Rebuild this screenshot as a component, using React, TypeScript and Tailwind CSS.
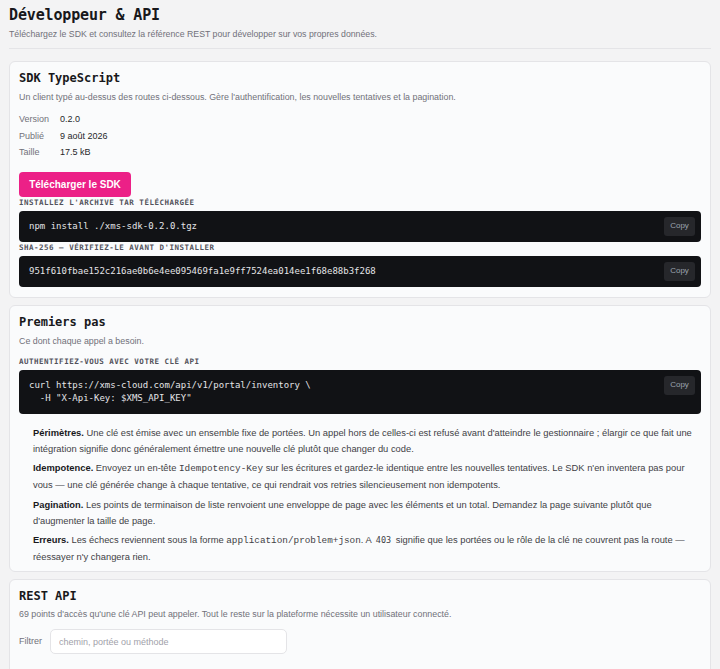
const sans = { fontFamily: '"Liberation Sans", Arial, sans-serif' };
const mono = { fontFamily: '"DejaVu Sans Mono", monospace' };
const ic = { fontFamily: '"Liberation Mono", monospace' };

function Label({ children }: { children: React.ReactNode }) {
  return (
    <div
      className="text-[7.5px] leading-[10px] font-bold uppercase tracking-[0.5px] text-[#52525b]"
      style={mono}
    >
      {children}
    </div>
  );
}

function Code({ lines }: { lines: string[] }) {
  return (
    <div className="relative mt-[3px] rounded-[4px] bg-[#111215] pl-[10px] pr-[44px] py-[9px]">
      <pre className="text-[9px] leading-[13px] text-[#e4e4e7] whitespace-pre" style={mono}>
        {lines.join('\n')}
      </pre>
      <button
        className="absolute top-[6px] right-[6px] h-[19px] w-[31px] rounded-[3px] bg-[#26272b] text-[8px] text-[#9ca3af]"
        style={sans}
      >
        Copy
      </button>
    </div>
  );
}

function Card({ children, className = '' }: { children: React.ReactNode; className?: string }) {
  return (
    <section className={`rounded-md border border-[#e4e4e7] bg-[#fafbfc] px-[9px] ${className}`}>
      {children}
    </section>
  );
}

function CardTitle({ children }: { children: React.ReactNode }) {
  return (
    <h2 className="text-[12px] leading-[16px] font-bold text-[#18181b]" style={mono}>
      {children}
    </h2>
  );
}

export default function App() {
  return (
    <div className="min-h-screen bg-[#f3f3f4] px-[9px] pt-[5px] pb-6 text-[#27272a]" style={sans}>
      <header className="border-b border-[#e4e4e7] pb-[7px]">
        <h1 className="text-[15px] leading-[20px] font-bold text-[#18181b] tracking-[-0.15px]" style={mono}>
          Développeur &amp; API
        </h1>
        <p className="mt-[3px] text-[8.75px] leading-[13px] text-[#71717a]">
          Téléchargez le SDK et consultez la référence REST pour développer sur vos propres données.
        </p>
      </header>

      <div className="mt-[12px] flex flex-col gap-[7px]">
        <Card className="pt-[8px] pb-[10px]">
          <CardTitle>SDK TypeScript</CardTitle>
          <p className="mt-[5px] text-[8.85px] leading-[12px] text-[#71717a]">
            Un client typé au-dessus des routes ci-dessous. Gère l'authentification, les nouvelles tentatives et la pagination.
          </p>
          <dl className="mt-[8px] grid grid-cols-[41px_1fr] text-[9px] leading-[16.5px]">
            <dt className="text-[#71717a]">Version</dt>
            <dd className="text-[#27272a]">0.2.0</dd>
            <dt className="text-[#71717a]">Publié</dt>
            <dd className="text-[#27272a]">9 août 2026</dd>
            <dt className="text-[#71717a]">Taille</dt>
            <dd className="text-[#27272a]">17.5 kB</dd>
          </dl>
          <button className="mt-[11px] h-[25px] w-[112px] rounded-[4px] bg-[#ec2087] text-[10px] font-bold text-white">
            Télécharger le SDK
          </button>
          <div className="mt-[1px]">
            <Label>Installez l'archive tar téléchargée</Label>
          </div>
          <Code lines={['npm install ./xms-sdk-0.2.0.tgz']} />
          <div className="mt-[1px]">
            <Label>SHA-256 — vérifiez-le avant d'installer</Label>
          </div>
          <Code lines={['951f610fbae152c216ae0b6e4ee095469fa1e9ff7524ea014ee1f68e88b3f268']} />
        </Card>

        <Card className="pt-[8px] pb-[6px]">
          <CardTitle>Premiers pas</CardTitle>
          <p className="mt-[5px] text-[8.85px] leading-[12px] text-[#71717a]">Ce dont chaque appel a besoin.</p>
          <div className="mt-[10px]">
            <Label>Authentifiez-vous avec votre clé API</Label>
          </div>
          <Code
            lines={[
              'curl https://xms-cloud.com/api/v1/portal/inventory \\',
              '  -H "X-Api-Key: $XMS_API_KEY"',
            ]}
          />
          <div className="mt-[11px] pl-[14px] flex flex-col gap-[3.5px] text-[9.35px] leading-[16px] text-[#3f3f46]">
            <p>
              <b className="text-[#18181b]">Périmètres.</b> Une clé est émise avec un ensemble fixe de portées. Un appel hors de celles-ci est refusé avant d'atteindre le gestionnaire ; élargir ce que fait une intégration signifie donc généralement émettre une nouvelle clé plutôt que changer du code.
            </p>
            <p>
              <b className="text-[#18181b]">Idempotence.</b> Envoyez un en-tête{' '}
              <code className="text-[9.35px]" style={ic}>Idempotency-Key</code> sur les écritures et gardez-le identique entre les nouvelles tentatives. Le SDK n'en inventera pas pour vous — une clé générée change à chaque tentative, ce qui rendrait vos retries silencieusement non idempotents.
            </p>
            <p>
              <b className="text-[#18181b]">Pagination.</b> Les points de terminaison de liste renvoient une enveloppe de page avec les éléments et un total. Demandez la page suivante plutôt que d'augmenter la taille de page.
            </p>
            <p>
              <b className="text-[#18181b]">Erreurs.</b> Les échecs reviennent sous la forme{' '}
              <code className="text-[9.35px]" style={ic}>application/problem+json</code>. A{' '}
              <code className="px-[2px] text-[8.5px]" style={mono}>403</code> signifie que les portées ou le rôle de la clé ne couvrent pas la route — réessayer n'y changera rien.
            </p>
          </div>
        </Card>

        <Card className="pt-[8px] pb-[20px]">
          <CardTitle>REST API</CardTitle>
          <p className="mt-[4px] text-[8.85px] leading-[12px] text-[#71717a]">
            69 points d'accès qu'une clé API peut appeler. Tout le reste sur la plateforme nécessite un utilisateur connecté.
          </p>
          <div className="mt-[9px] flex items-center gap-[8px]">
            <label className="text-[9px] text-[#71717a]">Filtrer</label>
            <input
              className="h-[25px] w-[237px] rounded-[5px] border border-[#e4e4e7] bg-white px-[8px] text-[9px] outline-none placeholder:text-[#a1a1aa]"
              style={sans}
              placeholder="chemin, portée ou méthode"
            />
          </div>
        </Card>
      </div>
    </div>
  );
}
